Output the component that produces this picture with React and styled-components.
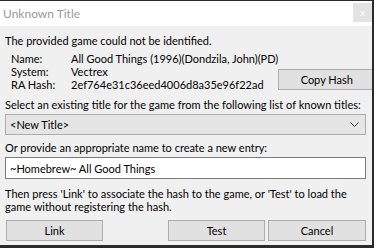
import React from 'react';
import styled, { createGlobalStyle } from 'styled-components';

const Global = createGlobalStyle`
  html, body { margin: 0; padding: 0; background: #f0f0f0; }
  * { box-sizing: border-box; }
`;

const Dialog = styled.div`
  width: 374px;
  height: 248px;
  overflow: hidden;
  display: flex;
  flex-direction: column;
  background: #f0f0f0;
  border-top: 1px solid #2b2b2b;
  border-right: 2px solid #2b2b2b;
  border-bottom: 3px solid #2b2b2b;
  font-family: Lato, "Noto Sans", sans-serif;
  font-size: 11px;
  line-height: 13px;
  color: #000;
`;

const TitleBar = styled.div`
  height: 25px;
  flex-shrink: 0;
  background: #fff;
  display: flex;
  align-items: flex-start;
  justify-content: space-between;
  padding: 0 0 0 3px;
`;

const Title = styled.span`
  color: #9a9a9a;
  font-size: 12px;
  line-height: 25px;
`;

const CloseBox = styled.div`
  width: 19px;
  height: 19px;
  margin-top: 2px;
  background: #e3e3e3;
  color: #fafafa;
  font-size: 10px;
  display: flex;
  align-items: center;
  justify-content: center;
  font-weight: bold;
`;

const Body = styled.div`
  flex: 1;
  display: flex;
  flex-direction: column;
  padding: 8px 5px 0 5px;
`;

const Line = styled.div`
  line-height: 13px;
  white-space: nowrap;
  margin-top: ${p => p.$mt || 0}px;
`;

const InfoRow = styled.div`
  display: flex;
  align-items: flex-end;
  justify-content: space-between;
  margin-top: 5px;
`;

const InfoGrid = styled.div`
  display: grid;
  grid-template-columns: 60px auto;
  padding-left: 6px;
  line-height: 13px;
  white-space: nowrap;
`;

const Button = styled.button`
  width: ${p => p.$w || 97}px;
  height: 21px;
  flex-shrink: 0;
  background: #e1e1e1;
  border: 1px solid #adadad;
  font-family: inherit;
  font-size: 11px;
  color: #000;
  padding: 0;
  margin: 0;
`;

const Dropdown = styled.div`
  height: 21px;
  margin-top: 3px;
  margin-right: 1px;
  background: #e5e5e5;
  border: 1px solid #acacac;
  display: flex;
  align-items: center;
  justify-content: space-between;
  padding: 0 6px 0 4px;
`;

const TextBox = styled.div`
  height: 22px;
  margin-top: 3px;
  margin-right: 1px;
  background: #fff;
  border: 1px solid #7a7a7a;
  display: flex;
  align-items: center;
  padding: 0 4px;
`;

const ButtonRow = styled.div`
  display: flex;
  justify-content: space-between;
  margin-top: 7px;
  padding-left: 1px;
  padding-right: 1px;
`;

const ButtonGroup = styled.div`
  display: flex;
  gap: 3px;
`;

export default function App() {
  return (
    <>
      <Global />
      <Dialog>
        <TitleBar>
          <Title>Unknown Title</Title>
          <CloseBox>x</CloseBox>
        </TitleBar>
        <Body>
          <Line>The provided game could not be identified.</Line>
          <InfoRow>
            <InfoGrid>
              <span>Name:</span><span>All Good Things (1996)(Dondzila, John)(PD)</span>
              <span>System:</span><span>Vectrex</span>
              <span>RA Hash:</span><span>2ef764e31c36eed4006d8a35e96f22ad</span>
            </InfoGrid>
            <Button $w={97} style={{ marginBottom: 1, marginRight: 1 }}>Copy Hash</Button>
          </InfoRow>
          <Line $mt={7}>Select an existing title for the game from the following list of known titles:</Line>
          <Dropdown>
            <span>&lt;New Title&gt;</span>
            <svg width="9" height="5" viewBox="0 0 9 5">
              <path d="M0.5 0.5 L4.5 4.5 L8.5 0.5" fill="none" stroke="#333" strokeWidth="1" />
            </svg>
          </Dropdown>
          <Line $mt={6}>Or provide an appropriate name to create a new entry:</Line>
          <TextBox>~Homebrew~ All Good Things</TextBox>
          <Line $mt={8}>Then press 'Link' to associate the hash to the game, or 'Test' to load the</Line>
          <Line>game without registering the hash.</Line>
          <ButtonRow>
            <Button $w={97}>Link</Button>
            <ButtonGroup>
              <Button $w={97}>Test</Button>
              <Button $w={98}>Cancel</Button>
            </ButtonGroup>
          </ButtonRow>
        </Body>
      </Dialog>
    </>
  );
}
